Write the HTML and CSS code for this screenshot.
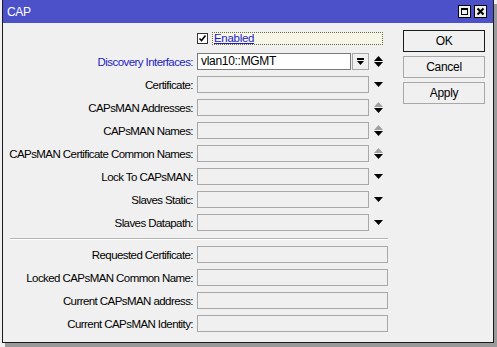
FILE: index.html
```html
<!DOCTYPE html>
<html>
<head>
<meta charset="utf-8">
<title>CAP</title>
<link rel="stylesheet" href="styles.css">
</head>
<body>
<div class="window">
  <div class="titlebar">
    <span class="title">CAP</span>
    <div class="tbtns">
      <svg class="tbtn" width="13" height="13" viewBox="0 0 13 13"><rect x="0.5" y="0.5" width="12" height="12" fill="#f0f0f0" stroke="#000"/><rect x="3.5" y="3.5" width="6" height="6" fill="none" stroke="#000"/><rect x="3" y="3" width="7" height="2" fill="#000"/></svg>
      <svg class="tbtn" width="13" height="13" viewBox="0 0 13 13"><rect x="0.5" y="0.5" width="12" height="12" fill="#f0f0f0" stroke="#000"/><path d="M3.5 3.5 L9.5 9.5 M9.5 3.5 L3.5 9.5" stroke="#000" stroke-width="2"/></svg>
    </div>
  </div>
  <div class="content">
    <div class="form">
      <div class="row">
        <span class="label"></span>
        <span class="check"><svg width="11" height="11" viewBox="0 0 11 11"><rect x="0.5" y="0.5" width="10" height="10" fill="#fff" stroke="#333"/><path d="M2.5 5.5 L4.5 7.5 L8.5 2.5" fill="none" stroke="#000" stroke-width="1.6"/></svg></span>
        <span class="checklabel">Enabled</span>
      </div>
      <div class="row">
        <span class="label blue">Discovery Interfaces:</span>
        <span class="input white">vlan10::MGMT</span>
        <span class="ddbtn"><svg width="9" height="8" viewBox="0 0 9 8"><rect x="1" y="0" width="7" height="2" fill="#000"/><path d="M1 3 H8 L4.5 7 Z" fill="#000"/></svg></span>
        <span class="arrow"><svg width="9" height="11" viewBox="0 0 9 11"><path d="M0 5 L4.5 0 L9 5 Z" fill="#000"/><path d="M0 6 H9 L4.5 11 Z" fill="#000"/></svg></span>
      </div>
      <div class="row">
        <span class="label">Certificate:</span>
        <span class="input"></span>
        <span class="arrow"><svg width="9" height="5" viewBox="0 0 9 5"><path d="M0 0 H9 L4.5 5 Z" fill="#000"/></svg></span>
      </div>
      <div class="row">
        <span class="label">CAPsMAN Addresses:</span>
        <span class="input"></span>
        <span class="arrow"><svg width="9" height="11" viewBox="0 0 9 11"><path d="M0 5 L4.5 0 L9 5 Z" fill="#a0a0a0"/><path d="M0 6 H9 L4.5 11 Z" fill="#000"/></svg></span>
      </div>
      <div class="row">
        <span class="label">CAPsMAN Names:</span>
        <span class="input"></span>
        <span class="arrow"><svg width="9" height="11" viewBox="0 0 9 11"><path d="M0 5 L4.5 0 L9 5 Z" fill="#a0a0a0"/><path d="M0 6 H9 L4.5 11 Z" fill="#000"/></svg></span>
      </div>
      <div class="row">
        <span class="label">CAPsMAN Certificate Common Names:</span>
        <span class="input"></span>
        <span class="arrow"><svg width="9" height="11" viewBox="0 0 9 11"><path d="M0 5 L4.5 0 L9 5 Z" fill="#a0a0a0"/><path d="M0 6 H9 L4.5 11 Z" fill="#000"/></svg></span>
      </div>
      <div class="row">
        <span class="label">Lock To CAPsMAN:</span>
        <span class="input"></span>
        <span class="arrow"><svg width="9" height="5" viewBox="0 0 9 5"><path d="M0 0 H9 L4.5 5 Z" fill="#000"/></svg></span>
      </div>
      <div class="row">
        <span class="label">Slaves Static:</span>
        <span class="input"></span>
        <span class="arrow"><svg width="9" height="5" viewBox="0 0 9 5"><path d="M0 0 H9 L4.5 5 Z" fill="#000"/></svg></span>
      </div>
      <div class="row">
        <span class="label">Slaves Datapath:</span>
        <span class="input"></span>
        <span class="arrow"><svg width="9" height="5" viewBox="0 0 9 5"><path d="M0 0 H9 L4.5 5 Z" fill="#000"/></svg></span>
      </div>
      <div class="sep"></div>
      <div class="row">
        <span class="label">Requested Certificate:</span>
        <span class="input wide"></span>
      </div>
      <div class="row">
        <span class="label">Locked CAPsMAN Common Name:</span>
        <span class="input wide"></span>
      </div>
      <div class="row">
        <span class="label">Current CAPsMAN address:</span>
        <span class="input wide"></span>
      </div>
      <div class="row">
        <span class="label">Current CAPsMAN Identity:</span>
        <span class="input wide"></span>
      </div>
    </div>
    <div class="buttons">
      <button class="btn default">OK</button>
      <button class="btn">Cancel</button>
      <button class="btn">Apply</button>
    </div>
  </div>
</div>
</body>
</html>
```

FILE: styles.css
```css
html, body {
  margin: 0;
  padding: 0;
}
body {
  background: #f0f0f0;
  width: 497px;
  height: 347px;
  overflow: hidden;
  font-family: "Liberation Sans", Arial, sans-serif;
  font-size: 11.5px;
  color: #000;
}
.window {
  margin-left: 2px;
  width: 492px;
  height: 343px;
  box-sizing: border-box;
  border: 1px solid #1a1a1a;
  border-top: none;
  background: #f0f0f0;
  box-shadow: 3px 4px 0 #9a9a9a;
  display: flex;
  flex-direction: column;
}
.titlebar {
  height: 23px;
  background: #4c51c9;
  display: flex;
  align-items: center;
  justify-content: space-between;
  padding: 0 6px 0 4px;
  flex: none;
}
.title {
  color: #fff;
  font-size: 12px;
  letter-spacing: -0.3px;
}
.tbtns {
  display: flex;
  gap: 3px;
}
.tbtn {
  display: block;
}
.content {
  display: flex;
  flex: 1;
}
.form {
  width: 400px;
  padding-top: 7px;
  display: flex;
  flex-direction: column;
  gap: 6px;
}
.row {
  display: flex;
  align-items: center;
  height: 17px;
}
.label {
  width: 190px;
  margin-right: 4px;
  text-align: right;
  white-space: nowrap;
  letter-spacing: -0.57px;
  flex: none;
}
.blue {
  color: #1c1cc4;
}
.check {
  width: 11px;
  height: 11px;
  display: flex;
  flex: none;
}
.checklabel {
  margin-left: 4px;
  width: 168px;
  height: 11px;
  line-height: 11px;
  border: 1px dotted #6a6a40;
  background: #f6f6e8;
  color: #1c1cc4;
  text-decoration: underline;
  padding-left: 1px;
  letter-spacing: -0.3px;
}
.input {
  width: 172px;
  height: 17px;
  box-sizing: border-box;
  border: 1px solid #a8a8a8;
  background: #f0f0f0;
  flex: none;
  line-height: 15px;
  padding-left: 3px;
  white-space: nowrap;
}
.input.white {
  width: 154px;
  background: #fff;
  border-color: #7a7a7a;
  font-size: 12px;
  letter-spacing: -0.3px;
}
.input.wide {
  width: 191px;
}
.ddbtn {
  width: 17px;
  height: 17px;
  box-sizing: border-box;
  margin-left: 1px;
  border: 1px solid #a8a8a8;
  background: #f0f0f0;
  display: flex;
  align-items: center;
  justify-content: center;
  flex: none;
}
.arrow {
  width: 19px;
  display: flex;
  justify-content: center;
  flex: none;
}
.arrow svg {
  display: block;
}
.sep {
  margin: 1px 0 0 7px;
  width: 378px;
  height: 1px;
  background: #b4b4b4;
  border-bottom: 1px solid #ffffff;
}
.buttons {
  padding-top: 7px;
  display: flex;
  flex-direction: column;
  gap: 4px;
}
.btn {
  width: 82px;
  height: 22px;
  box-sizing: border-box;
  border: 1px solid #a8a8a8;
  background: #f0f0f0;
  font-family: "Liberation Sans", Arial, sans-serif;
  font-size: 12px;
  letter-spacing: -0.3px;
  color: #000;
  padding: 0;
}
.btn.default {
  border: 1px solid #1a1a1a;
}
```
